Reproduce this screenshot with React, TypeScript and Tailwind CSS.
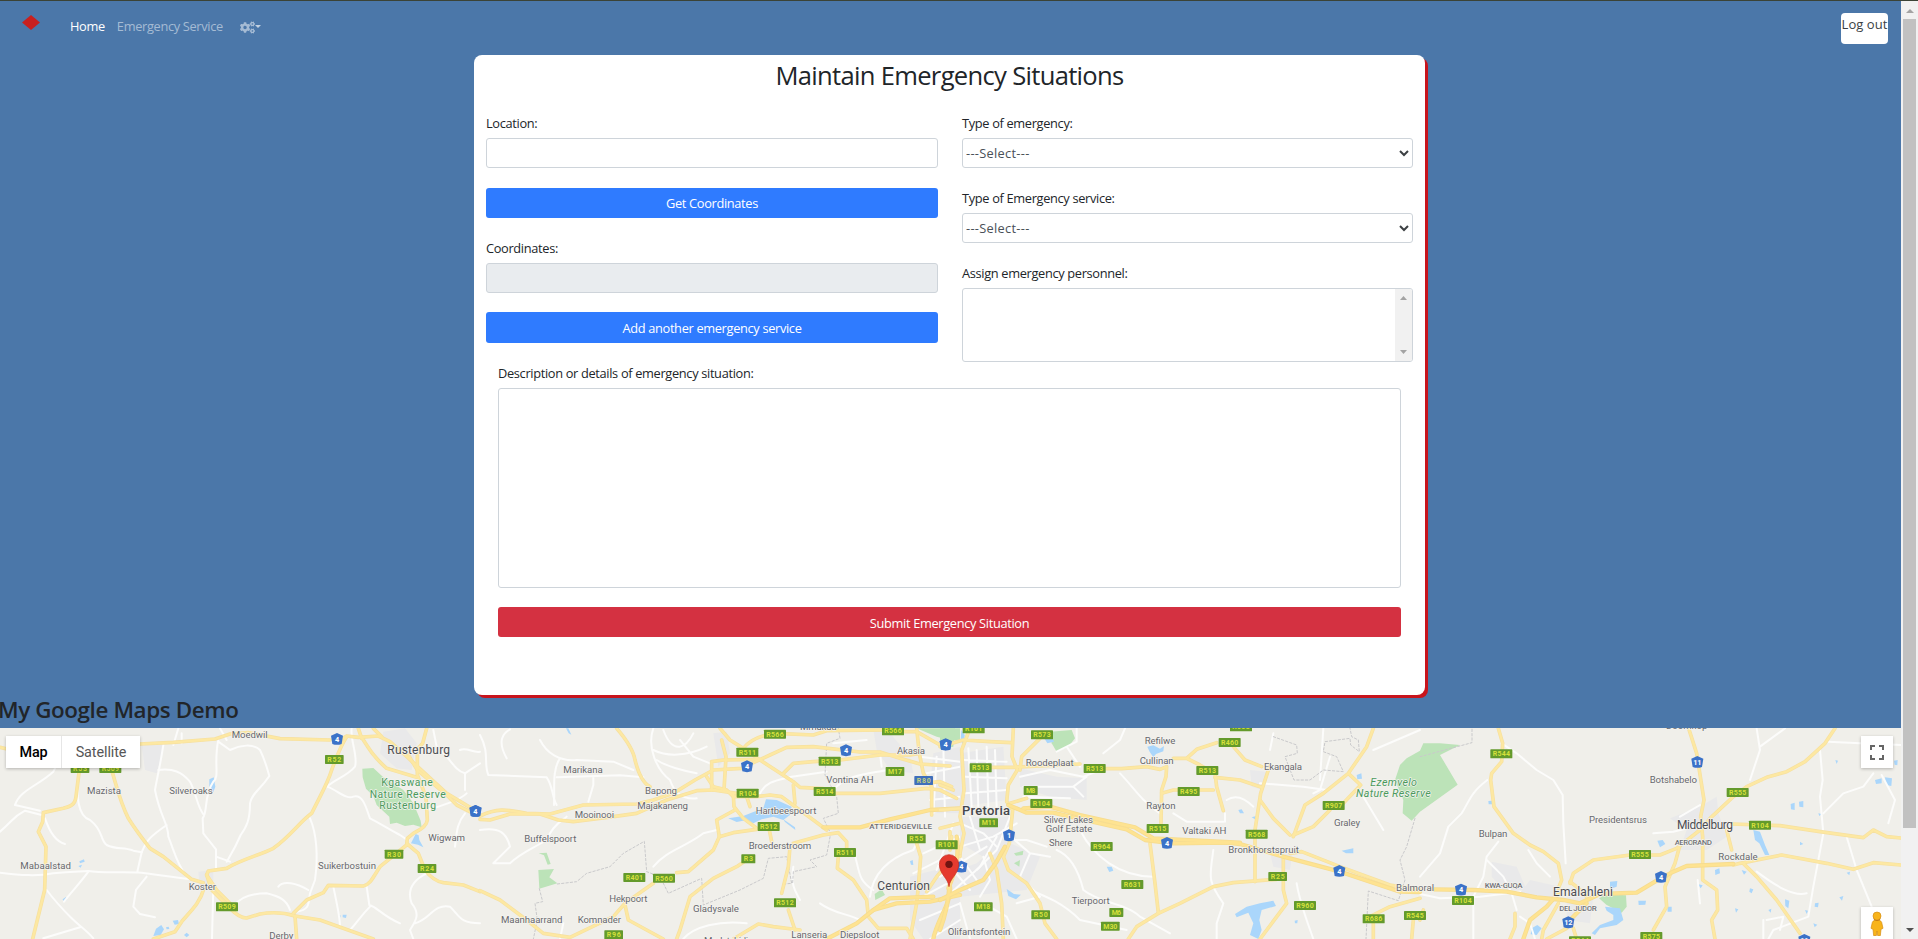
import type { ReactNode } from "react";
import { FaCogs } from "react-icons/fa";

const roboto = "Roboto, 'Liberation Sans', sans-serif";

type Label = [x: number, y: number, w: number, text: string, kind?: "city" | "capital" | "suburb" | "park" | "parkItalic"];
type Shield = [x: number, y: number, text: string, kind?: "n" | "r"];

interface Tile {
  x: number;
  parks: string[];
  water: string[];
  urban: string[];
  minor: string[];
  border: string[];
  major: string[];
  highway: string[];
  shields: Shield[];
  labels: Label[];
}

/* Each tile is drawn on a grid three times finer than the screen. */
const tiles: Tile[] = [
  {
    x: 0,
    urban: [
      "M425 165 L490 165 L480 215 L470 250 L435 240 Z",
      "M1150 125 L1215 115 L1250 160 L1235 240 L1190 235 L1140 190 Z",
      "M595 545 L640 540 L640 590 L600 595 Z",
    ],
    parks: [
      "M1087 236 L1120 234 L1150 262 L1210 300 L1240 340 L1262 392 L1265 412 L1240 404 L1215 408 L1190 398 L1170 402 L1168 380 L1130 345 L1120 318 L1098 296 L1088 262 Z",
    ],
    water: [
      "M628 268 L641 262 L646 290 L640 306 L628 298 Z",
      "M1247 432 L1256 436 L1258 450 L1270 472 L1254 464 L1233 460 Z",
      "M460 738 L468 716 L484 705 L492 718 L482 735 Z",
      "M518 692 L534 690 L537 702 L524 704 Z",
      "M238 514 L252 508 L254 515 L240 520 Z M235 528 L246 524 L242 533 Z",
      "M188 628 L198 621 L200 629 L192 636 Z",
      "M1028 674 L1040 674 L1038 684 L1028 682 Z M1016 678 L1022 676 L1020 684 Z",
      "M552 735 L560 728 L568 735 L560 742 Z M498 712 L506 710 L508 717 L500 718 Z",
    ],
    minor: [
      "M0 425 C40 390 40 380 75 362 L128 376",
      "M45 345 C60 300 110 290 160 245 L165 235",
      "M135 385 C150 430 170 455 195 462",
      "M45 345 L120 362",
      "M238 235 C225 320 235 380 270 390 C310 420 300 450 320 465 C350 480 370 470 400 482 L425 487",
      "M425 487 C440 450 450 440 500 405",
      "M490 165 C480 230 470 270 465 300 C480 380 505 400 505 440 C525 490 530 520 560 560",
      "M475 240 C520 235 545 245 570 275 C590 310 590 350 612 375",
      "M655 150 C640 220 660 260 640 275 C610 320 625 360 608 385 L610 430 L648 478 L648 540",
      "M655 155 L690 180 C720 165 760 160 780 180 C795 210 800 230 808 258 C780 300 755 310 750 340 C750 390 740 410 722 435 C705 475 695 490 680 515",
      "M648 500 L690 515",
      "M0 548 C60 555 110 560 160 550 C220 545 240 545 265 543 C300 550 370 545 425 548 C480 555 520 562 580 568",
      "M425 487 L412 545 M440 560 L408 600 L400 650 L420 672 L465 682",
      "M265 545 C240 580 210 610 192 635",
      "M140 600 C170 640 190 660 215 685 C240 710 260 720 280 745",
      "M130 745 L240 712",
      "M640 590 L636 747",
      "M1055 115 C1050 150 1075 200 1065 230 C1040 260 1000 270 982 290",
      "M982 290 C1010 300 1040 330 1060 320 C1090 310 1100 360 1110 385 C1140 400 1170 420 1200 435 L1225 452",
      "M930 385 C950 430 955 500 945 570 L930 610 C925 640 930 660 890 665",
      "M700 650 C720 620 760 610 800 610 C840 620 860 630 870 660",
      "M835 590 C850 570 890 580 925 600",
      "M1000 590 C1010 640 1020 680 1020 710",
      "M1280 550 C1240 570 1220 600 1235 640 C1260 670 1250 690 1230 720 L1240 747",
      "M1245 700 C1290 690 1300 640 1350 650 C1380 680 1380 700 1440 700",
      "M1100 590 L1108 645 C1130 650 1150 680 1200 700",
      "M1110 650 C1080 680 1070 700 1050 720",
      "M1300 120 L1310 170 C1350 200 1360 240 1395 250 L1440 220",
      "M1380 180 C1400 170 1420 190 1440 185 M1395 250 L1395 300",
      "M1280 360 C1320 350 1380 330 1400 310 M1395 370 C1370 400 1370 430 1365 470",
      "M520 165 L535 115 M545 160 L545 130 M680 150 L660 115",
    ],
    border: [],
    major: [
      "M0 172 L18 176 M420 162 L520 157 L645 147 L690 132 L745 128 L840 146 L990 150",
      "M1020 150 L1040 138 L1075 142 L1135 138 L1170 155 L1215 195 L1340 310 L1410 352",
      "M1040 140 C1020 170 1010 200 995 240 C985 275 970 300 935 370 C900 395 870 440 820 475 C780 495 720 510 680 535 L625 543 L620 555 L650 600 L695 645",
      "M1085 142 C1110 180 1120 200 1160 235 L1250 262",
      "M1120 115 L1145 140",
      "M1280 115 L1268 160 L1252 178",
      "M1225 195 L1252 240 L1340 315 L1370 345 L1430 375",
      "M1252 180 L1252 255 L1278 320 L1282 390 C1280 405 1270 415 1240 430 L1222 445 L1220 465 L1140 530 C1120 560 1110 585 1090 588 L985 586 L970 608 L920 630 L880 670",
      "M1222 462 L1255 490 L1275 540 C1290 560 1310 575 1330 578 L1390 585 L1440 605",
      "M238 240 L228 320 C225 345 210 350 190 355 L130 368 L128 395 L115 425 L138 470 L134 600 L98 747",
      "M335 240 C350 290 360 335 385 385 C410 425 430 450 450 475 L490 500 L575 568 L610 578",
      "M612 595 C600 640 570 665 545 695 L525 725 L460 747",
      "M620 555 L635 600 L690 655 C710 675 725 685 740 684 L780 672 C820 665 860 670 885 678 L960 690 L1120 747",
      "M885 678 L890 747",
      "M1075 115 L1085 145",
    ],
    highway: [],
    shields: [
      [240, 235, "R53"], [331, 235, "R509"], [1003, 208, "R52"], [1182, 492, "R30"], [1281, 535, "R24"], [681, 650, "R509"],
      [1011, 147, "4", "n"], [1427, 363, "4", "n"],
    ],
    labels: [
      [749, 135, 108, "Moedwil"], [312, 302, 102, "Mazista"], [573, 302, 130, "Silveroaks"], [137, 527, 152, "Mabaalstad"],
      [607, 590, 82, "Koster"], [1041, 527, 174, "Suikerbostuin"], [1340, 444, 110, "Wigwam"], [844, 738, 72, "Derby"],
      [1256, 180, 188, "Rustenburg", "city"],
      [1221, 277, 154, "Kgaswane", "park"], [1223, 312, 228, "Nature Reserve", "park"], [1223, 346, 170, "Rustenburg", "park"],
    ],
  },
  {
    x: 480,
    urban: [
      "M1360 190 L1440 170 L1440 370 L1370 370 L1350 290 Z",
      "M1290 560 L1440 520 L1440 747 L1330 747 L1290 690 Z",
      "M1180 120 L1230 130 L1290 200 L1300 250 L1230 240 L1190 180 Z",
      "M700 130 L740 125 L750 190 L715 230 Z",
    ],
    parks: [
      "M175 540 L222 537 L208 562 L232 580 L178 596 Z",
      "M176 490 L200 488 L212 522 L203 524 L192 496 Z",
      "M1310 115 L1440 115 L1440 152 L1400 148 L1370 140 Z",
      "M1184 612 L1205 598 L1215 615 L1186 630 Z",
    ],
    water: [
      "M745 385 L790 378 L820 366 L850 355 L858 328 L890 330 L935 350 L930 375 L910 390 L880 380 L845 388 L820 400 L800 390 L770 396 Z",
      "M910 388 L945 412 L946 420 L915 396 Z",
      "M258 115 L265 115 L274 134 L266 130 Z",
      "M1290 514 L1298 510 L1300 525 L1293 524 Z",
    ],
    minor: [
      "M0 135 C30 190 10 220 25 255 L200 262 C220 290 215 320 230 345",
      "M80 205 C50 150 70 130 90 118",
      "M240 205 C215 240 225 300 222 345 M180 150 C200 190 240 215 290 210 L400 215 L460 240",
      "M230 262 L420 256 L490 262 M340 262 L340 285 L325 335",
      "M520 115 C500 170 530 240 570 270 C580 300 600 330 650 325",
      "M550 120 C580 200 620 170 640 130 M520 180 C560 200 620 200 680 170 M600 150 L640 200 L690 220",
      "M530 210 C560 230 600 240 650 250",
      "M0 420 C60 410 80 430 90 470 L40 520 L90 520 C120 490 150 480 200 450 C220 400 250 390 260 380",
      "M520 530 C560 480 620 470 670 430 L710 420",
      "M840 310 C860 270 900 270 935 260 L1040 245",
      "M1060 300 C1100 250 1180 250 1220 240 M1060 160 L1160 150 M1200 190 L1205 230",
      "M940 530 C930 590 950 610 960 630",
      "M1170 620 C1180 540 1240 500 1300 480 L1320 440",
      "M1370 200 L1360 370 M1390 170 L1395 380 M1340 250 L1440 230 M1350 330 L1440 320 M1320 200 L1440 215",
      "M1330 490 L1440 440 M1300 550 L1400 500 M1290 640 L1440 560 M1320 690 L1440 640 M1350 747 L1440 690 M1420 400 L1370 540",
      "M610 747 C640 710 720 690 800 700 M240 747 L250 700",
      "M1120 480 C1140 540 1130 570 1180 600 M1020 640 C1060 670 1100 670 1140 690",
    ],
    border: [
      "M232 582 L290 575 L320 550 L390 530 L430 490 L493 454 L500 545 L540 560 L565 610 L665 565 L670 645 L780 600 L850 565 L865 505 L920 500 L935 580 L912 582",
      "M938 578 L940 545 L1010 530 L990 510 L1040 495 L1052 430 L1030 385 L1075 370 L1070 320 L1035 255 L1040 160 L1080 145 L1075 115",
      "M178 596 L188 635 L165 640 L172 690 L160 747",
    ],
    major: [
      "M410 115 C440 150 460 180 465 210 C475 250 490 280 510 290",
      "M0 378 C60 350 90 362 140 370 L210 372 L310 345 L470 342 L520 330 L580 310 L645 270 L700 240 L785 235 L820 218 L870 195 L920 172 L1000 170 L1140 186 L1200 186 L1260 205 L1320 222 L1410 228",
      "M0 388 L30 390 L90 372 L180 372 L235 390 L280 395 L400 380 L470 370 L560 330 L650 302 L700 300 L770 310",
      "M720 115 L750 150 L790 175 L840 210 L940 275 L960 292 L1030 296",
      "M725 150 L738 200 L732 300 M695 300 L695 215 L730 210 L830 208",
      "M790 175 C810 150 840 135 890 130 L1000 135 L1040 122 L1210 120",
      "M1240 125 L1310 125 L1380 165",
      "M910 250 L940 220 L1000 215 L1080 210 L1200 195 L1290 195 L1320 190",
      "M1060 310 L1200 310 L1340 295 L1380 300 L1430 325",
      "M1310 115 L1318 190 L1330 250 L1355 290 L1355 375",
      "M1330 280 L1380 275 L1415 290",
      "M680 260 L700 290 L740 300 L760 320 L830 320 L870 315 L905 320 L1000 390 L1040 420",
      "M760 315 L762 350 L790 385 L830 415 M810 350 L800 320 M765 360 L710 390 L718 440 L700 480 L625 545 L590 548",
      "M718 440 L760 428 L830 418",
      "M868 420 L875 455 M930 470 L925 530 L905 610 M925 660 L945 720",
      "M800 510 L770 530 L700 565 L630 620 L600 720 L590 747",
      "M940 460 L1030 435 L1075 428 L1100 455 L1100 480 M1075 500 L1072 535 L1120 570 L1160 630 L1165 680 L1195 715 L1280 715 L1300 747",
      "M1310 460 L1322 500 L1315 590 L1310 640 L1290 747",
      "M1410 425 L1410 460 M1440 470 L1440 500",
      "M0 602 L60 630 L100 660 L140 690 L190 730 L270 742 L400 680 L435 640 L520 580",
      "M435 645 L445 690 L500 720 L550 747",
      "M760 747 L835 702 L880 710 L960 720",
      "M940 285 L945 340 M1340 605 L1370 560 L1395 530",
    ],
    highway: [
      "M1030 412 L1140 412 L1230 388 L1350 360 L1440 355",
      "M1040 747 L1130 700 L1180 660 L1250 640 L1350 635 L1440 615",
      "M1410 590 C1415 640 1370 690 1360 747",
      "M1180 660 L1230 625 L1360 620",
    ],
    shields: [
      [885, 132, "R566"], [1239, 122, "R566"], [802, 186, "R511"], [1049, 213, "R513"], [1245, 244, "M17"], [1331, 271, "R80", "r"],
      [803, 309, "R104"], [1034, 304, "R514"], [866, 409, "R512"], [805, 506, "R3"], [1095, 487, "R511"], [1309, 446, "R55"],
      [1400, 464, "R101"], [463, 562, "R401"], [552, 564, "R560"], [915, 638, "R512"], [401, 734, "R96"],
      [801, 229, "4", "n"], [1098, 181, "4", "n"], [1397, 164, "4", "n"], [-14, 363, "4", "n"],
    ],
    labels: [
      [309, 240, 118, "Marikana"], [543, 302, 96, "Bapong"], [548, 348, 152, "Majakaneng"], [343, 374, 118, "Mooinooi"],
      [211, 446, 156, "Buffelspoort"], [445, 626, 114, "Hekpoort"], [155, 689, 184, "Maanhaarrand"], [358, 689, 130, "Komnader"],
      [708, 657, 138, "Gladysvale"], [900, 467, 188, "Broederstroom"], [918, 362, 182, "Hartbeespoort"], [1110, 270, 142, "Vontina AH"],
      [1293, 182, 84, "Akasia"], [1262, 409, 188, "ATTERIDGEVILLE", "suburb"], [1271, 587, 158, "Centurion", "city"],
      [988, 735, 108, "Lanseria"], [1139, 735, 118, "Diepsloot"], [738, 751, 132, "Modatshidi"], [1015, 110, 110, "Mmakau"],
    ],
  },
  {
    x: 940,
    urban: [
      "M60 190 L190 170 L200 330 L60 350 Z",
      "M0 560 L110 520 L190 450 L300 500 L260 600 L60 620 Z",
      "M240 235 L350 260 L440 265 L440 330 L330 320 L240 290 Z",
      "M930 240 L980 245 L970 300 L935 290 Z",
      "M990 490 L1060 470 L1050 540 L1000 530 Z",
      "M60 380 L210 380 L230 450 L130 500 L60 460 Z",
    ],
    parks: [
      "M0 115 L45 115 L40 170 L0 178 Z",
      "M330 125 L395 120 L405 145 L385 170 L350 185 L335 160 Z",
      "M1500 160 L1560 165 L1500 195 L1553 284 L1440 365 L1415 392 L1388 370 L1390 330 L1365 270 L1380 225 L1400 205 L1440 182 L1450 160 Z",
      "M222 490 L250 482 L248 495 L228 497 Z",
      "M222 520 L240 510 L238 530 Z",
    ],
    water: [
      "M622 170 L640 166 L660 176 L672 168 L670 184 L648 192 L640 202 L628 184 Z",
      "M310 140 L330 130 L342 155 L322 160 Z",
      "M885 672 L920 650 L960 640 L1000 632 L1008 648 L965 660 L958 690 L965 720 L955 747 L930 735 L940 700 L925 668 L890 682 Z",
      "M200 597 L222 612 L243 614 L228 628 L205 618 Z",
      "M1250 255 L1264 250 L1266 266 L1252 268 Z",
      "M500 530 L515 530 L520 542 L508 546 Z",
      "M895 360 L905 358 L912 370 L900 370 Z M935 382 L948 378 L945 388 Z",
      "M1205 482 L1240 475 L1240 490 L1218 490 Z",
      "M1064 692 L1073 690 L1072 700 L1065 700 Z",
      "M64 120 L74 135 L72 170 L62 150 Z",
    ],
    minor: [
      "M85 175 L95 350 M110 180 L115 350 M140 170 L145 350 M165 180 L170 350 M70 210 L200 215 M75 260 L200 265 M75 310 L200 300",
      "M60 400 L130 430 L170 470 M90 380 L120 480 M210 380 L170 480 L110 540 M60 470 L160 440 L230 400",
      "M0 560 L90 500 L140 470 M20 620 L120 530 L170 440 M60 500 L110 570 M40 540 L90 600 M130 500 L150 570 L120 620",
      "M190 420 L270 490 L330 500 M200 450 L260 450 L320 470 M270 490 L240 560 L300 620 L230 640",
      "M350 185 L410 155 L410 115 M380 170 L420 230 M490 190 L540 150 L555 115",
      "M240 260 L330 240 L430 260 L470 245 M250 290 L400 290 L440 260 M400 290 L430 320 M250 320 L390 325",
      "M540 250 C580 290 600 330 660 370",
      "M350 480 C400 500 420 560 430 600 C480 640 560 640 600 680 L690 730",
      "M270 600 C320 620 370 640 420 690 L560 720",
      "M420 420 C460 500 540 560 640 560",
      "M700 370 L740 395 L850 395 M855 370 L855 395 M860 330 C890 310 920 330 940 350",
      "M960 280 L1090 290 L1160 300",
      "M1000 130 L990 180 M1150 115 L1140 270",
      "M820 480 C810 560 800 570 850 640 L830 700 L830 747",
      "M1070 580 C1080 640 1100 690 1120 747",
      "M1170 200 L1140 300 L1120 310 M1300 180 L1440 120",
      "M1270 320 L1330 420 M130 640 L200 680 L230 747 M60 640 L90 747",
    ],
    border: [
      "M1000 140 L1070 165 L1072 190 L1035 200 L1062 270 L1110 270 L1150 240 L1210 245 L1190 200 L1150 185 L1155 155 L1230 145 L1232 165 L1258 185 L1255 150 L1235 140 L1230 115",
      "M1425 385 L1400 470 L1380 510 L1395 570 L1375 632 L1285 603 L1278 747",
      "M1440 200 L1596 158 L1596 115",
    ],
    major: [
      "M220 115 L216 200 L232 240 L205 285 L200 335 L218 360 L208 460 L190 500",
      "M0 170 L70 150 L150 155 L215 158 M90 115 L65 180 L72 300 L60 380 L72 430 L60 490",
      "M120 232 L220 232 L420 222 M460 236 L545 236 L620 230 L660 238 L680 230 L678 260 L665 300 L663 400",
      "M240 240 L245 200 L300 145",
      "M700 205 L740 205 L770 178 L830 158 M740 205 L780 225 L825 250 L830 290 L850 362",
      "M880 170 L915 210 L965 230 M990 225 L962 310 L945 420 L945 575",
      "M825 262 L900 270 L965 292 M665 310 L700 300 L820 300",
      "M960 330 L1000 385 L1050 435 M1300 115 L1280 170 L1225 250 L1150 310 L1095 345 L1060 440 M1225 250 L1262 285 L1200 350",
      "M1060 435 L1120 410 L1170 360",
      "M1050 490 L1085 485 L1200 530 L1350 585 L1440 600 M1030 500 L1030 600 L1040 640 L960 747",
      "M1010 568 L880 578 L820 590 L720 640 L655 670 L590 710 L565 747",
      "M630 460 L645 580 L655 668",
      "M190 500 L205 540 L260 580 L300 640 L315 700 L350 747",
      "M150 490 L170 540 L185 640 L190 747",
      "M1290 680 L1350 650 L1440 625 M1300 700 L1300 747 M1420 690 L1415 747",
      "M0 360 L60 355 M0 415 L60 400 M35 440 L30 480 M0 285 L40 300",
      "M210 340 L260 325",
    ],
    highway: [
      "M205 345 L260 368 L340 368 L400 382 L480 400 L560 418 L615 450 L700 460 L860 458 L900 462 L1030 500 L1200 545 L1380 605 L1440 606",
      "M250 355 L330 350 L420 375 L585 412 L640 445 L900 458",
      "M25 595 C40 560 60 500 50 440 M28 590 C25 640 15 680 0 720",
      "M0 630 L60 600 L130 570 L170 515 L195 470",
    ],
    shields: [
      [101, 116, "R101"], [306, 134, "R573"], [122, 233, "R513"], [464, 235, "R513"], [869, 157, "R460"], [903, 110, "R568"],
      [802, 241, "R513"], [272, 301, "M8"], [746, 304, "R495"], [304, 340, "R104"], [146, 398, "M11"], [1181, 346, "R907"],
      [653, 415, "R515"], [950, 432, "R568"], [485, 469, "R964"], [1013, 559, "R25"], [577, 583, "R631"],
      [1095, 646, "R960"], [130, 650, "M18"], [529, 667, "M6"], [302, 674, "R50"], [511, 708, "M30"], [1301, 686, "R686"],
      [1425, 676, "R545"],
      [17, 163, "4", "n"], [207, 436, "1", "n"], [681, 459, "4", "n"], [1198, 543, "4", "n"], [64, 530, "4", "n"],
    ],
    labels: [
      [660, 153, 92, "Refilwe"], [650, 213, 102, "Cullinan"], [329, 218, 144, "Roodeplaat"], [1029, 230, 114, "Ekangala"],
      [663, 347, 88, "Rayton"], [138, 361, 144, "Pretoria", "capital"], [385, 388, 148, "Silver Lakes"], [387, 417, 140, "Golf Estate"],
      [362, 458, 70, "Shere"], [793, 422, 132, "Valtaki AH"], [971, 479, 212, "Bronkhorstspruit"], [1221, 398, 78, "Graley"],
      [452, 633, 114, "Tierpoort"], [117, 724, 188, "Olifantsfontein"], [1425, 592, 114, "Balmoral"],
      [1361, 275, 140, "Ezemvelo", "parkItalic"], [1360, 308, 224, "Nature Reserve", "parkItalic"],
    ],
  },
  {
    x: 1420,
    urban: [
      "M750 385 L840 350 L890 320 L895 370 L920 440 L860 480 L780 480 L800 420 Z",
      "M215 515 L290 530 L320 600 L250 600 L215 560 Z",
      "M330 570 L420 590 L400 625 L300 610 Z",
      "M440 620 L520 620 L510 700 L440 690 Z",
    ],
    parks: ["M537 625 L560 612 L618 616 L620 650 L605 668 L560 645 Z"],
    water: [
      "M555 650 L600 655 L610 690 L590 705 L540 715 L525 735 L515 730 L540 705 L580 690 L580 675 L560 662 Z",
      "M570 575 L592 573 L590 590 L570 597 Z",
      "M335 715 L352 705 L365 715 L350 735 L332 733 Z",
      "M712 452 L728 450 L736 462 L720 472 Z",
      "M1000 420 L1020 425 L1035 465 L1048 495 L1035 495 L1018 460 L1005 450 Z",
      "M1137 335 L1150 333 L1150 352 L1138 350 Z M1112 342 L1124 338 L1124 360 L1113 358 Z",
      "M1365 270 L1385 265 L1385 280 L1368 282 Z M1395 262 L1416 265 L1414 288 L1398 285 Z",
      "M1422 212 L1433 210 L1432 226 L1424 224 Z M1246 210 L1254 212 L1250 222 Z",
      "M1095 628 L1108 632 L1105 655 L1096 648 Z M990 595 L1000 598 L995 610 L988 605 Z",
      "M655 632 L678 632 L676 644 L656 645 Z M833 582 L848 586 L842 595 Z",
      "M742 650 L755 650 L755 665 L743 665 Z M885 540 L898 535 L900 550 L886 555 Z",
      "M1185 640 L1196 638 L1194 652 L1184 650 Z M1258 622 L1270 618 L1266 632 Z",
      "M1155 660 L1164 662 L1160 672 Z M1280 548 L1290 545 L1288 556 Z M205 333 L216 332 L216 343 L206 343 Z",
      "M1140 455 L1150 462 L1140 466 Z M1195 370 L1206 372 L1198 378 Z M945 655 L955 658 L948 668 Z",
      "M1045 660 L1054 656 L1052 668 Z M1180 700 L1192 704 L1184 712 Z M965 540 L980 545 L972 554 Z",
    ],
    minor: [
      "M245 160 L290 190 L350 240 L400 270 L428 315 L430 400 L437 520",
      "M202 270 C150 310 150 330 125 370 L85 410 L60 490 L0 560",
      "M235 455 L200 500 L190 560 L160 620 L160 747",
      "M200 510 L250 560 L275 610 L290 660",
      "M325 480 L350 520 L390 560",
      "M1010 115 L1020 180 L990 270 M1020 170 L1095 115",
      "M1225 155 L1320 160 L1443 165",
      "M1200 180 L1208 270 L1200 320 L1210 430 L1180 590 L1165 680 L1060 720 L1045 747",
      "M1360 250 L1330 290 L1270 310 L1210 370 M1385 255 L1425 330 L1405 400",
      "M1280 440 L1310 540 L1355 650",
      "M1010 545 C1070 590 1120 620 1160 610",
      "M1040 690 L1090 680 L1080 720 M1030 690 L1030 747",
      "M840 640 L833 570 M0 612 L60 625 L180 620 L300 605",
      "M700 430 L760 425 L820 410 M780 380 L840 345",
      "M300 680 L330 700 L345 747",
    ],
    border: [],
    major: [
      "M235 115 L248 160 L245 215 L215 250 L212 270 L222 350 L280 430 L330 465 L370 485 L415 520 L425 570 L415 595",
      "M806 115 L830 190 L852 330 L842 380 L848 440 L848 570 L890 600 L893 660 L875 690 L885 747",
      "M1245 115 L1215 160 L1155 215 L1100 245 L1040 262 L980 290 L940 320 L870 385 L850 410",
      "M935 402 L1080 407 L1200 425 L1330 443 L1360 420 L1400 440 L1443 444",
      "M920 420 L935 480",
      "M450 580 L460 550 L520 510 L630 495 L720 495 L770 475 L840 420",
      "M780 465 L765 520 L735 590 L740 650 L700 720",
      "M450 575 L470 590 L505 625",
      "M940 525 L960 520 L1085 495 L1220 520 L1300 538 L1360 518 L1443 525",
      "M970 520 L1010 560 L1070 630 L1140 730",
      "M285 670 L285 710 L270 747 M460 715 L470 747 M415 640 L370 720 L365 747",
      "M0 690 L10 660 M440 715 L380 747",
    ],
    highway: [
      "M40 598 L160 600 L260 605 L350 622 L430 630 L480 640",
      "M480 640 L540 612 L650 608 L710 572 L760 545 L800 528 L940 522",
      "M415 610 L380 650 L330 690 L310 747",
      "M500 640 L450 690",
    ],
    shields: [
      [244, 191, "R544"], [953, 307, "R555"], [1020, 405, "R104"], [660, 493, "R555"], [129, 631, "R104"], [694, 739, "R575"], [480, 752, "R544"],
      [832, 216, "11", "n"], [723, 561, "4", "n"], [123, 599, "4", "n"], [445, 697, "12", "n"], [1153, 750, "11", "n"],
    ],
    labels: [
      [760, 268, 142, "Botshabelo"], [594, 388, 174, "Presidentsrus"], [219, 432, 86, "Bulpan"], [855, 405, 168, "Middelburg", "city"],
      [820, 455, 112, "AERORAND", "suburb"], [954, 501, 118, "Rockdale"], [251, 584, 114, "KWA-GUQA", "suburb"],
      [489, 604, 180, "Emalahleni", "city"], [474, 654, 112, "DEL JUDOR", "suburb"], [800, 108, 124, "Doornkop"],
    ],
  },
];

function Strokes({ paths, color, width, dash }: { paths: string[]; color: string; width: number; dash?: string }) {
  return (
    <g fill="none" stroke={color} strokeWidth={width} strokeLinejoin="round" strokeLinecap="round" strokeDasharray={dash}>
      {paths.map((d, i) => <path key={i} d={d} />)}
    </g>
  );
}

const labelStyle = {
  town: { size: 29, fill: "#67686d", weight: 400, italic: false },
  city: { size: 36, fill: "#4c4d52", weight: 400, italic: false },
  capital: { size: 39, fill: "#45464b", weight: 500, italic: false },
  suburb: { size: 24, fill: "#6f7075", weight: 500, italic: false },
  park: { size: 31, fill: "#4b9a5d", weight: 400, italic: false },
  parkItalic: { size: 32, fill: "#4b9a5d", weight: 400, italic: true },
};

function MapLabel({ label: [x, y, w, text, kind] }: { label: Label }) {
  const s = labelStyle[kind ?? "town"];
  return (
    <text
      x={x} y={y + s.size * 0.36} textAnchor="middle" textLength={w} fontSize={s.size} fill={s.fill} fontWeight={s.weight}
      fontStyle={s.italic ? "italic" : "normal"} stroke="#f4f3ef" strokeWidth={4} strokeLinejoin="round" paintOrder="stroke"
    >
      {text}
    </text>
  );
}

function RoadShield({ shield: [x, y, text, kind] }: { shield: Shield }) {
  if (kind === "n") {
    return (
      <g transform={`translate(${x} ${y})`}>
        <path d="M0 -18 L18 -10 L14 15 Q0 20 -14 15 L-18 -10 Z" fill="#3b72c8" />
        <text y={8} textAnchor="middle" fontSize={22} fontWeight={700} fill="#fff">{text}</text>
      </g>
    );
  }
  const w = text.length === 4 ? 66 : text.length === 3 ? 56 : 42;
  return (
    <g transform={`translate(${x} ${y})`}>
      <rect x={-w / 2} y={-13} width={w} height={27} rx={2} fill={kind === "r" ? "#3f6fbb" : "#649a2c"} />
      <text y={8} textAnchor="middle" textLength={w - 14} fontSize={21} fontWeight={700} fill={kind === "r" ? "#c3cf80" : "#d5e03c"}>
        {text}
      </text>
    </g>
  );
}

function MapCanvas() {
  const at = (x: number) => `translate(${x} -38) scale(0.33333)`;
  return (
    <svg className="block" width="1901" height="211" viewBox="0 0 1901 211" fontFamily={roboto} letterSpacing="0">
      <rect width="1901" height="211" fill="#f0efea" />
      {tiles.map((t) => (
        <g key={t.x} transform={at(t.x)}>
          {t.urban.map((d, i) => <path key={i} d={d} fill="#e9e9ea" />)}
          {t.parks.map((d, i) => <path key={i} d={d} fill="#bce3b8" />)}
          {t.water.map((d, i) => <path key={i} d={d} fill="#aad6fb" />)}
          <Strokes paths={t.minor} color="#fcfcfb" width={6} />
          <Strokes paths={t.border} color="#c9c9cb" width={3} dash="7 6" />
        </g>
      ))}
      {tiles.map((t) => (
        <g key={t.x} transform={at(t.x)}>
          <Strokes paths={t.major} color="#f6e0a0" width={11} />
          <Strokes paths={t.major} color="#fde8a2" width={7} />
          <Strokes paths={t.highway} color="#f6dc90" width={13} />
          <Strokes paths={t.highway} color="#fee391" width={8} />
        </g>
      ))}
      {tiles.map((t) => (
        <g key={t.x} transform={at(t.x)}>
          {t.shields.map((s, i) => <RoadShield key={i} shield={s} />)}
          {t.labels.map((l, i) => <MapLabel key={i} label={l} />)}
        </g>
      ))}
      <g transform={at(940)}>
        <path d="M27 590 C25 565 -2 553 -2 523 A29 29 0 0 1 56 523 C56 553 29 565 27 590 Z" fill="#e53a2e" stroke="#c4271d" strokeWidth={2} />
        <circle cx={27} cy={523} r={11} fill="#711411" />
      </g>
    </svg>
  );
}

function Pegman() {
  return (
    <svg width="16" height="25" viewBox="0 0 48 75">
      <path d="M10 34 Q12 27 24 27 Q36 27 38 34 L42 52 L36 55 L34 74 L26 74 L24 60 L22 74 L14 74 L12 55 L6 52 Z" fill="#f8b41b" stroke="#d38b12" strokeWidth="2" />
      <circle cx="24" cy="15" r="12" fill="#f8b41b" stroke="#d38b12" strokeWidth="2" />
      <path d="M14 24 Q24 34 34 24" fill="none" stroke="#c87f10" strokeWidth="3" />
    </svg>
  );
}

function GoogleMap() {
  return (
    <section className="relative h-[211px] w-full overflow-hidden">
      <MapCanvas />
      <div className="absolute left-[6px] top-[8px] flex h-[32px] bg-white font-[Roboto,sans-serif] text-[14.4px] leading-[34px] tracking-[-0.1px] shadow-[0_1px_3px_rgba(0,0,0,0.25)]">
        <button className="w-[55px] text-center font-medium text-black">Map</button>
        <button className="w-[79px] border-l border-[#e6e6e6] text-center text-[#565656]">Satellite</button>
      </div>
      <button className="absolute left-[1861px] top-[8px] flex size-[32px] items-center justify-center bg-white shadow-[0_1px_3px_rgba(0,0,0,0.25)]">
        <svg width="14" height="15" viewBox="0 0 14 15" fill="none" stroke="#666" strokeWidth="2">
          <path d="M1 5V1H5M9 1H13V5M13 10V14H9M5 14H1V10" />
        </svg>
      </button>
      <button className="absolute left-[1861px] top-[179px] flex h-[36px] w-[32px] justify-center bg-white pt-[4px] shadow-[0_1px_3px_rgba(0,0,0,0.25)]">
        <Pegman />
      </button>
    </section>
  );
}

function FieldLabel({ children }: { children: ReactNode }) {
  return <label className="mb-[5px] block h-[20px] leading-[20px]">{children}</label>;
}

function SelectField() {
  return (
    <div className="relative">
      <select className="block h-[30px] w-full appearance-none rounded-[3px] border border-[#ced4da] bg-white pl-[3px] pt-[2px] tracking-[0.3px] text-[#495057]">
        <option>---Select---</option>
      </select>
      <svg className="absolute right-[4px] top-[12px]" width="10" height="7" viewBox="0 0 10 7" fill="none" stroke="#3c4043" strokeWidth="2">
        <path d="M1 1L5 5L9 1" />
      </svg>
    </div>
  );
}

const primaryButton = "w-full rounded-[3px] bg-[#2f7bff] pt-[2px] text-center text-white";

function EmergencyForm() {
  return (
    <main className="ml-[474px] mt-[10px] h-[640px] w-[951px] rounded-[8px] bg-white text-[#212529] shadow-[3px_3px_0_#c8141c]">
      <h2 className="pt-[5px] text-center text-[25.6px] leading-[32px] tracking-[-0.7px]">Maintain Emergency Situations</h2>
      <div className="flex gap-[24px] px-[12px] pt-[21px]">
        <div className="w-[452px]">
          <FieldLabel>Location:</FieldLabel>
          <input className="block h-[30px] w-full rounded-[3px] border border-[#ced4da] bg-white px-2" />
          <button className={`${primaryButton} mt-[20px] block h-[30px]`}>Get Coordinates</button>
          <div className="pt-[20px]">
            <FieldLabel>Coordinates:</FieldLabel>
            <input disabled className="block h-[30px] w-full rounded-[3px] border border-[#ced4da] bg-[#e9ecef] px-2" />
          </div>
          <button className={`${primaryButton} mt-[19px] block h-[31px]`}>Add another emergency service</button>
        </div>
        <div className="w-[451px]">
          <FieldLabel>Type of emergency:</FieldLabel>
          <SelectField />
          <div className="pt-[20px]">
            <FieldLabel>Type of Emergency service:</FieldLabel>
            <SelectField />
          </div>
          <div className="pt-[20px]">
            <FieldLabel>Assign emergency personnel:</FieldLabel>
            <div className="flex h-[74px] w-full justify-end overflow-hidden rounded-[3px] border border-[#ced4da] bg-white">
              <div className="flex w-[17px] flex-col items-center justify-between bg-[#f1f1f1] pb-[7px] pt-[7px]">
                <svg width="7" height="4" viewBox="0 0 7 4"><path d="M0 4L3.5 0L7 4Z" fill="#a3a3a3" /></svg>
                <svg width="7" height="4" viewBox="0 0 7 4"><path d="M0 0L3.5 4L7 0Z" fill="#a3a3a3" /></svg>
              </div>
            </div>
          </div>
        </div>
      </div>
      <div className="px-[24px] pt-px">
        <div>
          <FieldLabel>Description or details of emergency situation:</FieldLabel>
          <textarea className="block h-[200px] w-full resize-none rounded-[3px] border border-[#ced4da] bg-white" />
        </div>
        <button className="mt-[19px] block h-[30px] w-full rounded-[3px] bg-[#d43141] pt-[3px] text-center text-white">Submit Emergency Situation</button>
      </div>
    </main>
  );
}

function NavBar() {
  return (
    <nav className="flex h-[44px] items-center pl-[22px] pt-[8px]">
      <svg className="-mt-[13px] translate-y-[2px]" width="18" height="15" viewBox="0 0 18 15"><path d="M9 0L18 7.5L9 15L0 7.5Z" fill="#c8201f" /></svg>
      <a className="ml-[30px] text-white">Home</a>
      <a className="ml-[12px] text-[#a5bbd4]">Emergency Service</a>
      <a className="ml-[17px] flex items-center text-[#a5bbd4]">
        <FaCogs size={15} />
        <svg className="-mt-[2px]" width="6" height="3" viewBox="0 0 6 3"><path d="M0 0H6L3 3Z" fill="#c3d1e1" /></svg>
      </a>
      <button className="ml-auto mr-[13px] mt-[2px] flex h-[31px] w-[47px] justify-center whitespace-nowrap rounded-[4px] bg-white pt-px text-[13px] leading-[20px] tracking-[0.05px] text-[#3b3f44]">
        Log out
      </button>
    </nav>
  );
}

function PageScrollbar() {
  return (
    <aside className="flex w-[17px] flex-col items-center bg-[#f1f1f1] pt-[8px]">
      <svg width="8" height="4" viewBox="0 0 8 4"><path d="M0 4L4 0L8 4Z" fill="#a3a3a3" /></svg>
      <div className="mt-[6px] h-[809px] w-[13px] bg-[#c1c1c1]" />
      <svg className="mt-[100px]" width="8" height="4" viewBox="0 0 8 4"><path d="M0 0L4 4L8 0Z" fill="#505050" /></svg>
    </aside>
  );
}

export default function App() {
  return (
    <div className="flex h-[939px] w-[1918px] flex-col overflow-hidden bg-[#4b77a9] font-['Open_Sans','Noto_Sans',sans-serif] text-[12.8px] tracking-[-0.33px]">
      <div className="h-px bg-[#3b4336]" />
      <div className="flex min-h-0 flex-1">
        <div className="flex w-[1901px] flex-col">
          <NavBar />
          <EmergencyForm />
          <h3 className="-ml-[2px] h-[33px] text-[22.4px] font-semibold leading-[29px] tracking-[-0.4px] text-[#212529]">My Google Maps Demo</h3>
          <GoogleMap />
        </div>
        <PageScrollbar />
      </div>
    </div>
  );
}
